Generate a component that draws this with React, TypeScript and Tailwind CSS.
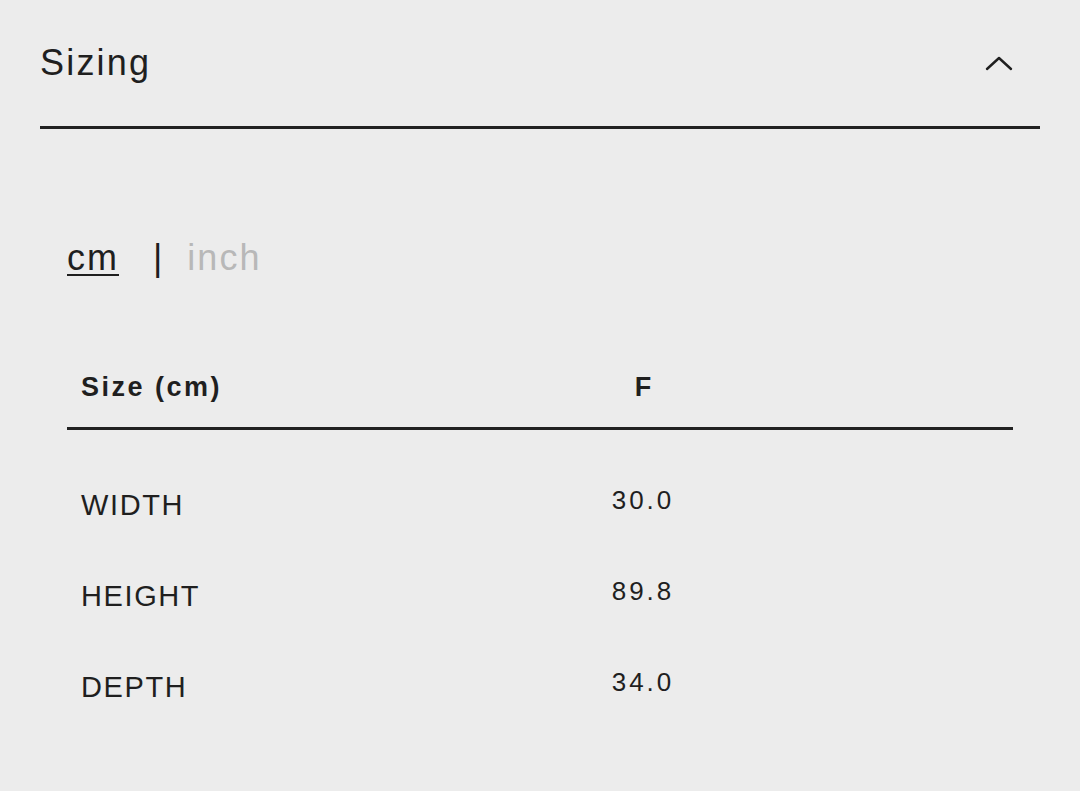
import React, { useState } from 'react';

const rows = [
  { label: 'WIDTH', value: '30.0' },
  { label: 'HEIGHT', value: '89.8' },
  { label: 'DEPTH', value: '34.0' },
];

const font = { fontFamily: '"Liberation Sans", Arial, sans-serif' };

export default function App() {
  const [unit, setUnit] = useState<'cm' | 'inch'>('cm');

  return (
    <div className="min-h-[791px] w-full bg-[#ececec] px-[40px] text-[#1f1f1f]" style={font}>
      {/* Accordion header */}
      <div className="flex h-[129px] items-center justify-between border-b-[3px] border-[#222]">
        <h2 className="text-[36px] font-normal leading-none tracking-[2.2px]">Sizing</h2>
        <svg width="28" height="16" viewBox="0 0 28 16" className="mr-[27px]" fill="none">
          <polyline points="2,14 14,3 26,14" stroke="#1f1f1f" strokeWidth="2.4" strokeLinecap="round" strokeLinejoin="round" />
        </svg>
      </div>

      {/* Unit switch */}
      <div className="mt-[109px] flex h-[40px] items-center pl-[27px] text-[36px] leading-none tracking-[2px]">
        <button
          onClick={() => setUnit('cm')}
          className={`underline decoration-2 underline-offset-[4px] ${unit === 'cm' ? 'text-[#1f1f1f]' : 'text-[#b8b8b8]'}`}
        >
          cm
        </button>
        <span className="ml-[34px] mr-[23px] text-[#1f1f1f]">|</span>
        <button onClick={() => setUnit('inch')} className={unit === 'inch' ? 'text-[#1f1f1f]' : 'text-[#b8b8b8]'}>
          inch
        </button>
      </div>

      {/* Size table */}
      <div className="ml-[27px] mr-[27px] mt-[69px]">
        <div className="flex h-[83px] items-center border-b-[3px] border-[#222]">
          <div className="w-[456px] pl-[14px] text-[27px] font-bold tracking-[2.5px]">Size (cm)</div>
          <div className="w-[240px] text-center text-[27px] font-bold">F</div>
        </div>
        <div className="mt-[30px]">
          {rows.map((r) => (
            <div key={r.label} className="flex h-[91px] items-center">
              <div className="w-[456px] pl-[14px] text-[29px] tracking-[1.6px]">{r.label}</div>
              <div className="mb-[10px] w-[240px] text-center text-[26px] tracking-[3px]">{r.value}</div>
            </div>
          ))}
        </div>
      </div>
    </div>
  );
}
